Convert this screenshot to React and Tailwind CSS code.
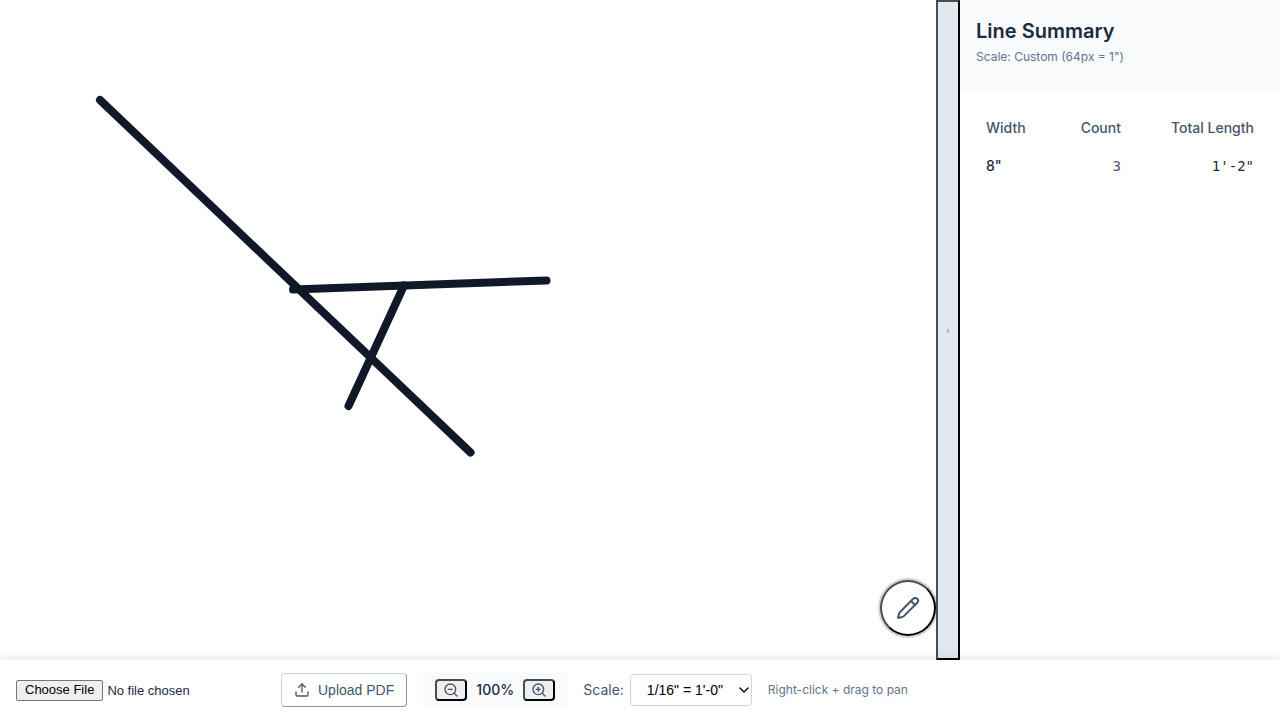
import { ChevronDown, Pencil, Upload, ZoomIn, ZoomOut } from 'lucide-react';

const strokes = [
  { x1: 100, y1: 100, x2: 470.5, y2: 452.5 },
  { x1: 293, y1: 289.5, x2: 546.5, y2: 280.5 },
  { x1: 404, y1: 285.5, x2: 348.5, y2: 406 },
];

const rows = [{ width: '8"', count: 3, total: `1'-2"` }];

function Canvas() {
  return (
    <section className="relative min-w-0 flex-1 bg-white" aria-label="Drawing">
      <svg className="block size-full">
        <g stroke="#111827" strokeWidth="8" strokeLinecap="round">
          {strokes.map((s) => (
            <line key={`${s.x1}-${s.y1}`} {...s} />
          ))}
        </g>
      </svg>
      <button
        type="button"
        aria-label="Draw"
        className="absolute right-0 bottom-6 flex size-14 items-center justify-center rounded-full border-2 border-t-[#4c4c4c] border-r-black border-b-black border-l-[#4c4c4c] bg-white text-slate-600 shadow-[0_0_0_2px_#cbd5e1]"
      >
        <Pencil className="size-6" />
      </button>
    </section>
  );
}

function Summary() {
  return (
    <aside className="w-80 shrink-0 bg-white">
      <header className="bg-slate-50 px-4 pt-4 pb-6">
        <h2 className="text-xl leading-[30px] font-semibold text-slate-800">Line Summary</h2>
        <p className="text-xs leading-[22px] text-slate-500">Scale: Custom (64px = 1")</p>
      </header>
      <div className="p-4">
        <table className="w-full text-sm text-slate-600">
          <thead>
            <tr className="h-10">
              <th className="px-2.5 text-left font-medium">Width</th>
              <th className="px-2.5 text-right font-medium">Count</th>
              <th className="px-2.5 text-right font-medium">Total Length</th>
            </tr>
          </thead>
          <tbody>
            {rows.map((row) => (
              <tr key={row.width} className="h-9">
                <td className="px-2.5 text-left font-medium text-slate-800">{row.width}</td>
                <td className="px-2.5 text-right font-['DejaVu_Sans_Mono',monospace]">
                  {row.count}
                </td>
                <td className="px-2.5 text-right font-['DejaVu_Sans_Mono',monospace] text-slate-800">
                  {row.total}
                </td>
              </tr>
            ))}
          </tbody>
        </table>
      </div>
    </aside>
  );
}

const zoomButton =
  'flex h-[22px] w-8 items-center justify-center rounded border-2 border-t-[#4c4c4c] border-r-black border-b-black border-l-[#4c4c4c] bg-[#efefef] text-slate-600';

function Toolbar() {
  return (
    <footer className="relative flex h-[60px] shrink-0 items-center gap-4 bg-white px-4 shadow-[0_-2px_10px_rgba(0,0,0,0.1)]">
      <input
        type="file"
        aria-label="PDF file"
        className="w-[249px] font-['Liberation_Sans',sans-serif] text-[13px] leading-4 text-slate-800 file:mr-1 file:h-[21px] file:rounded-[2px] file:border file:border-solid file:border-[#767676] file:bg-[#efefef] file:px-2 file:text-black"
      />
      <button
        type="button"
        className="flex h-[34px] shrink-0 items-center gap-2 rounded border border-t-slate-300 border-r-[#8e959e] border-b-[#8e959e] border-l-slate-300 bg-white px-3 font-['Liberation_Sans',sans-serif] text-sm text-slate-600"
      >
        <Upload className="size-4" />
        Upload PDF
      </button>
      <div className="flex h-[34px] shrink-0 items-center gap-2 rounded bg-slate-50 px-3">
        <button type="button" aria-label="Zoom out" className={zoomButton}>
          <ZoomOut className="size-4" />
        </button>
        <span className="w-10 text-center text-sm font-medium text-slate-800">100%</span>
        <button type="button" aria-label="Zoom in" className={zoomButton}>
          <ZoomIn className="size-4" />
        </button>
      </div>
      <div className="flex shrink-0 items-center gap-1.5">
        <label htmlFor="scale" className="text-sm text-slate-600">
          Scale:
        </label>
        <div className="relative">
          <select
            id="scale"
            className="block h-8 w-[122px] appearance-none rounded border border-slate-300 bg-white px-4 font-['Liberation_Sans',sans-serif] text-sm text-black"
          >
            <option>1/16" = 1'-0"</option>
          </select>
          <ChevronDown className="pointer-events-none absolute inset-y-0 right-0 my-auto size-4 text-black" />
        </div>
      </div>
      <span className="shrink-0 text-xs text-slate-500">Right-click + drag to pan</span>
    </footer>
  );
}

export default function App() {
  return (
    <div className="flex h-screen flex-col overflow-hidden bg-white font-[Inter,sans-serif] text-slate-800">
      <main className="flex min-h-0 flex-1">
        <Canvas />
        <button
          type="button"
          aria-label="Collapse summary"
          className="relative w-6 shrink-0 border-2 border-t-[#4c4c4c] border-r-black border-b-black border-l-[#4c4c4c] bg-slate-200 text-[8px] text-slate-500"
        >
          ›
        </button>
        <Summary />
      </main>
      <Toolbar />
    </div>
  );
}
